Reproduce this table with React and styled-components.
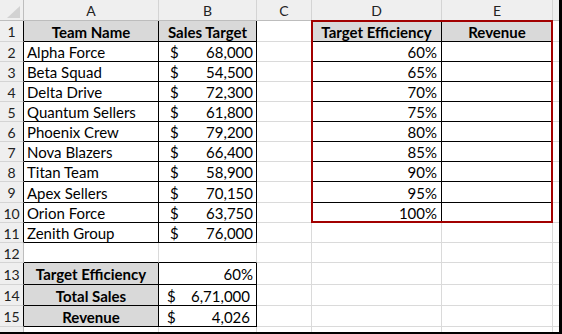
import React from 'react';
import styled, { createGlobalStyle } from 'styled-components';

const GlobalStyle = createGlobalStyle`
  body {
    margin: 0;
    background: #fff;
    font-family: Lato, 'Liberation Sans', sans-serif;
  }
`;

const Frame = styled.div`
  position: relative;
  width: 562px;
  height: 334px;
  box-sizing: border-box;
  border-right: 3px solid #000;
  border-bottom: 2px solid #000;
  overflow: hidden;
  background: #fff;
`;

const Sheet = styled.div`
  display: grid;
  grid-template-columns: 24px 135px 98px 55px 130px 111px 1fr;
  grid-template-rows: 21px 21px repeat(7, 20px) 21px 20px 20px 20px 22px 21px 21px 1fr;
  height: 100%;
  font-size: 15px;
  color: #000;
`;

const HeaderCell = styled.div`
  display: flex;
  align-items: center;
  justify-content: center;
  box-sizing: border-box;
  background: #efefef;
  color: #222;
  font-size: 14px;
  border-right: 1px solid ${(p) => p.$rc || '#d4d4d4'};
  border-bottom: 1px solid ${(p) => p.$bc || '#d4d4d4'};
  padding-top: 1px;
`;

const Corner = styled(HeaderCell)`
  align-items: stretch;
  justify-content: stretch;
  padding: 0;
  svg {
    display: block;
  }
`;

const Cell = styled.div`
  display: flex;
  align-items: center;
  justify-content: ${(p) => p.$align || 'flex-start'};
  box-sizing: border-box;
  padding: 1px ${(p) => p.$pr ?? 3}px 0 ${(p) => p.$pl ?? 3}px;
  background: ${(p) => p.$bg || '#fff'};
  font-weight: ${(p) => (p.$bold ? 700 : 400)};
  border-right: 1px solid ${(p) => p.$rc};
  border-bottom: 1px solid ${(p) => p.$bc};
  white-space: nowrap;
  overflow: hidden;
`;

const Highlight = styled.div`
  position: absolute;
  left: 311px;
  top: 20px;
  width: 242px;
  height: 203px;
  box-sizing: border-box;
  border: 2px solid #a20000;
  pointer-events: none;
`;

const GRID = '#dadada';
const EDGE = '#bdbdbd';
const LINE = '#000';

const teams = [
  ['Alpha Force', '68,000'],
  ['Beta Squad', '54,500'],
  ['Delta Drive', '72,300'],
  ['Quantum Sellers', '61,800'],
  ['Phoenix Crew', '79,200'],
  ['Nova Blazers', '66,400'],
  ['Titan Team', '58,900'],
  ['Apex Sellers', '70,150'],
  ['Orion Force', '63,750'],
  ['Zenith Group', '76,000'],
];

const efficiencies = ['60%', '65%', '70%', '75%', '80%', '85%', '90%', '95%', '100%'];

// ranges with thin black borders on every cell edge
const boxes = [
  { r1: 1, c1: 1, r2: 11, c2: 2 },
  { r1: 13, c1: 1, r2: 15, c2: 2 },
  { r1: 1, c1: 4, r2: 10, c2: 5 },
];

const inBox = (r, c) => boxes.some((b) => r >= b.r1 && r <= b.r2 && c >= b.c1 && c <= b.c2);

const rightColor = (r, c) => (inBox(r, c) || inBox(r, c + 1) ? LINE : GRID);
const bottomColor = (r, c) => (inBox(r, c) || inBox(r + 1, c) ? LINE : GRID);

const money = (value, pl, pr) => ({ kind: 'money', value, pl, pr });

const buildCells = () => {
  const rows = {};
  for (let r = 1; r <= 16; r++) rows[r] = {};
  rows[1][1] = { text: 'Team Name', bold: true, bg: '#d9d9d9', align: 'center' };
  rows[1][2] = { text: 'Sales Target', bold: true, bg: '#d9d9d9', align: 'center' };
  rows[1][4] = { text: 'Target Efficiency', bold: true, bg: '#d9d9d9', align: 'center' };
  rows[1][5] = { text: 'Revenue', bold: true, bg: '#d9d9d9', align: 'center' };
  teams.forEach(([name, target], i) => {
    rows[i + 2][1] = { text: name };
    rows[i + 2][2] = money(target, 11, 3);
  });
  efficiencies.forEach((e, i) => {
    rows[i + 2][4] = { text: e, align: 'flex-end', pr: 4 };
  });
  rows[13][1] = { text: 'Target Efficiency', bold: true, bg: '#d9d9d9', align: 'center' };
  rows[13][2] = { text: '60%', align: 'flex-end', pr: 3 };
  rows[14][1] = { text: 'Total Sales', bold: true, bg: '#d9d9d9', align: 'center' };
  rows[14][2] = money('6,71,000', 8, 6);
  rows[15][1] = { text: 'Revenue', bold: true, bg: '#d9d9d9', align: 'center' };
  rows[15][2] = money('4,026', 8, 6);
  return rows;
};

const columns = ['A', 'B', 'C', 'D', 'E', ''];

const App = () => {
  const cells = buildCells();
  const out = [];

  out.push(
    <Corner key="corner" $rc={EDGE} $bc={EDGE}>
      <svg width="23" height="20" viewBox="0 0 23 20">
        <polygon points="7,18 20,18 20,6" fill="#d2d2d2" />
      </svg>
    </Corner>
  );
  columns.forEach((name, i) => {
    out.push(
      <HeaderCell key={`h${i}`} $bc={EDGE}>
        {name}
      </HeaderCell>
    );
  });

  for (let r = 1; r <= 16; r++) {
    out.push(
      <HeaderCell key={`r${r}`} $rc={inBox(r, 1) ? LINE : EDGE}>
        {r}
      </HeaderCell>
    );
    for (let c = 1; c <= 6; c++) {
      const cell = cells[r][c] || {};
      const common = {
        key: `${r}-${c}`,
        $rc: rightColor(r, c),
        $bc: bottomColor(r, c),
        $bg: cell.bg,
        $bold: cell.bold,
      };
      if (cell.kind === 'money') {
        out.push(
          <Cell {...common} $align="space-between" $pl={cell.pl} $pr={cell.pr}>
            <span>$</span>
            <span>{cell.value}</span>
          </Cell>
        );
      } else {
        out.push(
          <Cell {...common} $align={cell.align} $pr={cell.pr}>
            {cell.text}
          </Cell>
        );
      }
    }
  }

  return (
    <>
      <GlobalStyle />
      <Frame>
        <Sheet>{out}</Sheet>
        <Highlight />
      </Frame>
    </>
  );
};

export default App;
